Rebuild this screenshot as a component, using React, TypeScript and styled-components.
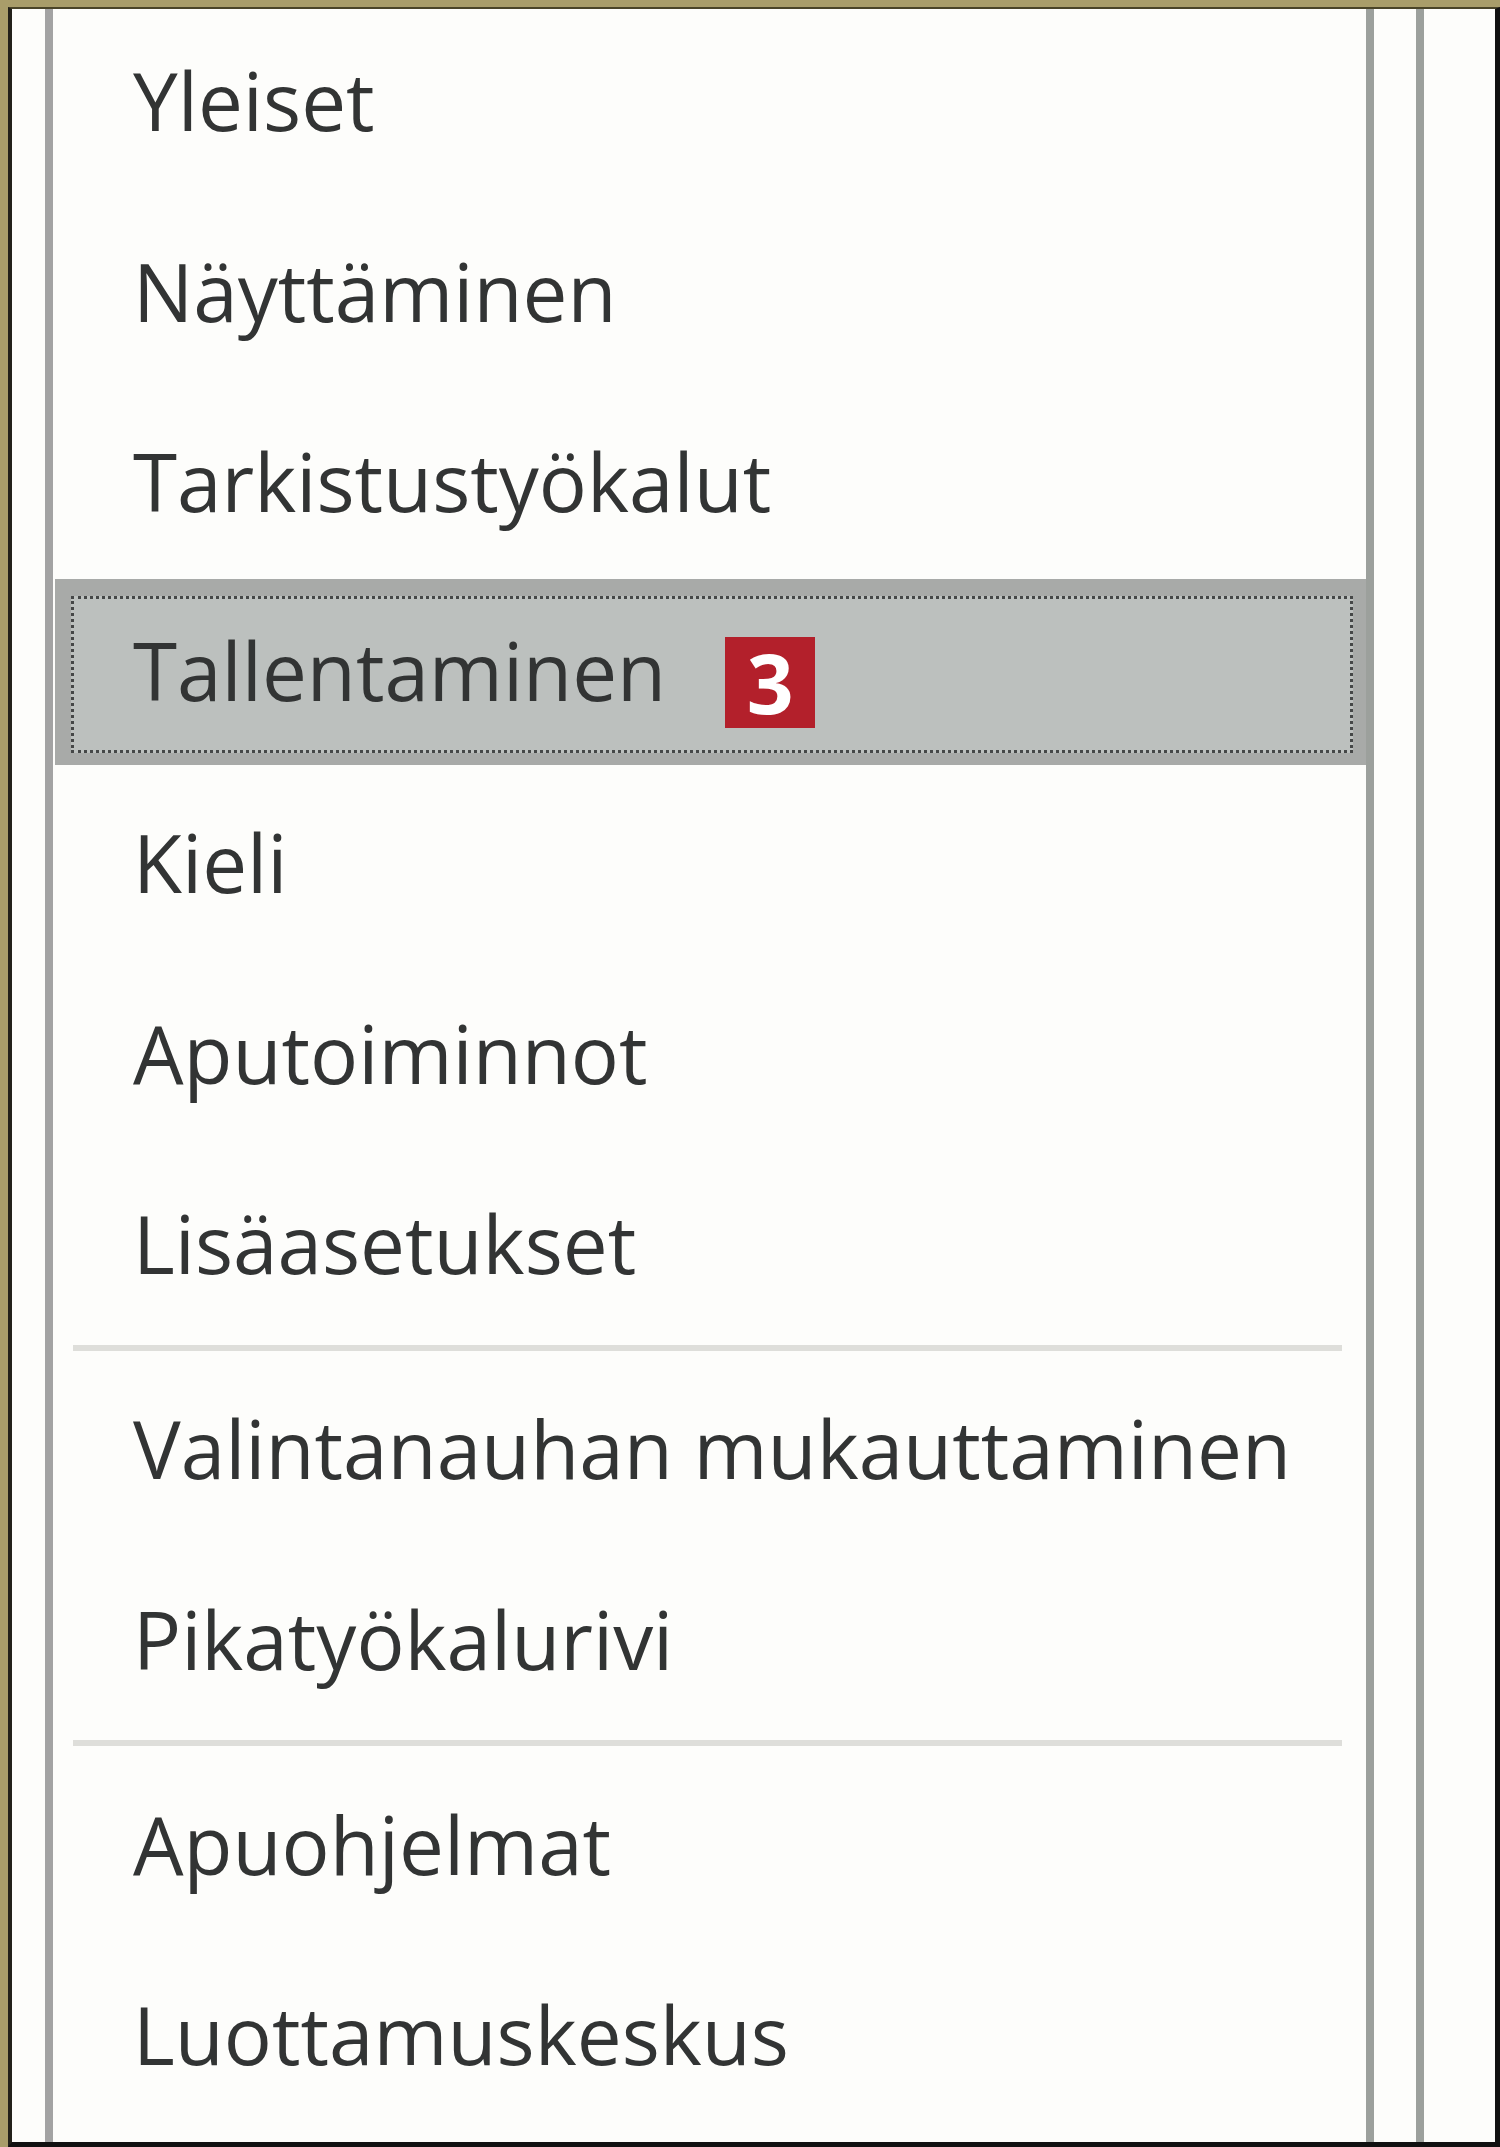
import React from "react";
import styled, { createGlobalStyle } from "styled-components";

const Global = createGlobalStyle`
  html, body { margin: 0; padding: 0; background: #a99d6a; }
  #root { width: 1500px; height: 2147px; }
`;

const Window = styled.div`
  width: 1500px;
  height: 2147px;
  box-sizing: border-box;
  background: #a99d6a;
  padding: 7px 0 0 8px;
  display: flex;
`;

const Frame = styled.div`
  flex: 1;
  display: flex;
  background: #fdfdfb;
  border-left: 4px solid #23211a;
  border-top: 2px solid #4a4428;
  border-right: 5px solid #111;
  border-bottom: 5px solid #111;
`;

const Gutter = styled.div<{ $w: number }>`
  width: ${(p) => p.$w}px;
  flex: none;
`;

const VLine = styled.div<{ $color: string }>`
  width: 8px;
  flex: none;
  background: ${(p) => p.$color};
`;

const Nav = styled.nav`
  flex: 1;
  display: flex;
  flex-direction: column;
  font-family: "Open Sans", "Noto Sans", sans-serif;
  color: #323434;
`;

const Row = styled.div<{ $active?: boolean }>`
  height: ${(p) => (p.$active ? "186px" : "190.5px")};
  margin-top: ${(p) => (p.$active ? "-2px" : "0")};
  margin-bottom: ${(p) => (p.$active ? "6.5px" : "0")};
  flex: none;
  box-sizing: border-box;
  display: flex;
  padding: ${(p) => (p.$active ? "17px 13px 12px 16px" : "0")};
  margin-left: ${(p) => (p.$active ? "2px" : "0")};
  background: ${(p) => (p.$active ? "#a8aaa8" : "transparent")};
`;

const Inner = styled.div<{ $active?: boolean }>`
  flex: 1;
  display: flex;
  align-items: center;
  gap: 59px;
  padding-left: ${(p) => (p.$active ? "59px" : "80px")};
  background: ${(p) => (p.$active ? "#bcc0be" : "transparent")};
  border: ${(p) => (p.$active ? "3px dotted #454747" : "none")};
`;

const Label = styled.span`
  font-size: 80px;
  line-height: 1;
  white-space: nowrap;
  margin-bottom: 8px;
`;

const Badge = styled.span`
  width: 90px;
  height: 91px;
  background: #b3202b;
  color: #fff;
  font-family: "Open Sans", "Noto Sans", sans-serif;
  font-weight: 700;
  font-size: 82px;
  line-height: 91px;
  text-align: center;
  margin-top: 17px;
`;

const Separator = styled.div`
  height: 14.5px;
  flex: none;
  display: flex;
  align-items: flex-start;
  padding: 2px 24px 0 20px;
  box-sizing: border-box;
  &::after {
    content: "";
    flex: 1;
    height: 6px;
    background: #dededa;
  }
`;

type Item = { label: string; active?: boolean; badge?: string } | "sep";

const items: Item[] = [
  { label: "Yleiset" },
  { label: "Näyttäminen" },
  { label: "Tarkistustyökalut" },
  { label: "Tallentaminen", active: true, badge: "3" },
  { label: "Kieli" },
  { label: "Aputoiminnot" },
  { label: "Lisäasetukset" },
  "sep",
  { label: "Valintanauhan mukauttaminen" },
  { label: "Pikatyökalurivi" },
  "sep",
  { label: "Apuohjelmat" },
  { label: "Luottamuskeskus" },
];

export default function App() {
  return (
    <>
      <Global />
      <Window>
        <Frame>
          <Gutter $w={33} />
          <VLine $color="#a3a3a3" />
          <Nav>
            {items.map((it, i) =>
              it === "sep" ? (
                <Separator key={i} />
              ) : (
                <Row key={i} $active={it.active}>
                  <Inner $active={it.active}>
                    <Label>{it.label}</Label>
                    {it.badge && <Badge>{it.badge}</Badge>}
                  </Inner>
                </Row>
              )
            )}
          </Nav>
          <VLine $color="#9ca09c" />
          <Gutter $w={42} />
          <VLine $color="#9ca09c" />
          <Gutter $w={71} />
        </Frame>
      </Window>
    </>
  );
}
